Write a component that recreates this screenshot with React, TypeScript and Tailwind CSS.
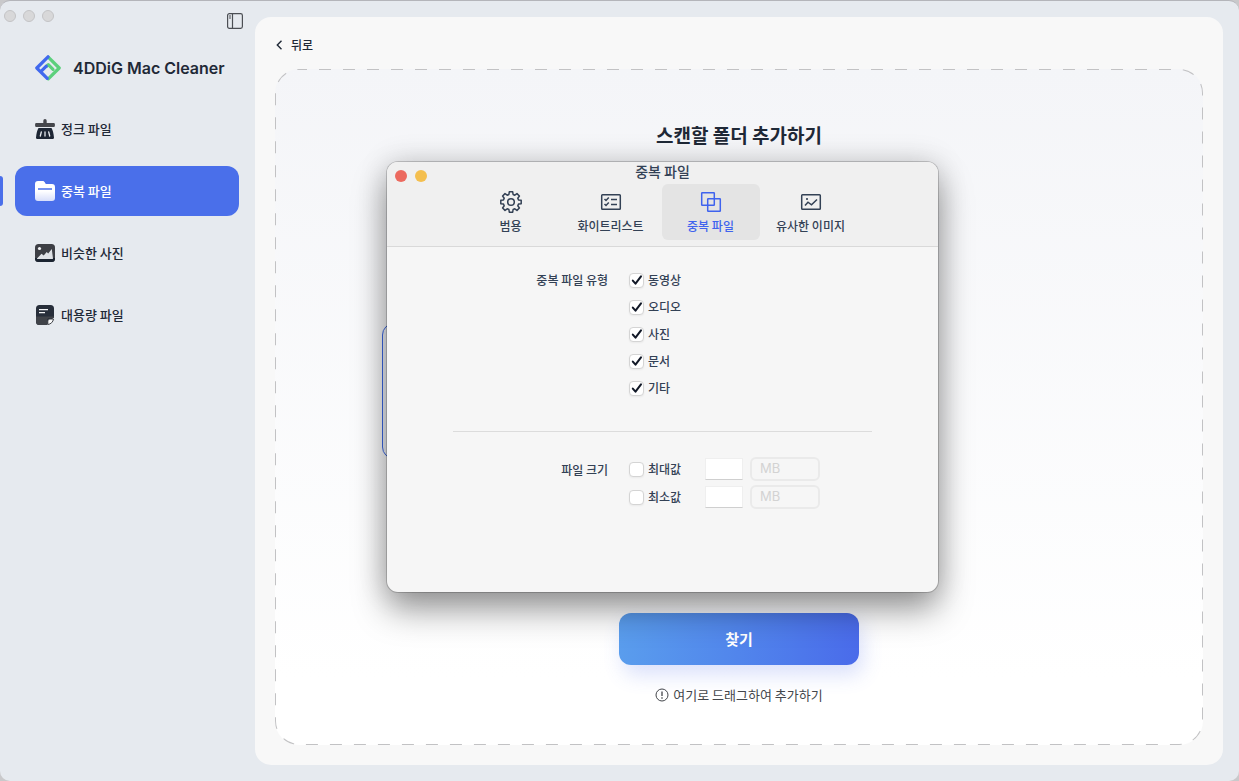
import type { ReactNode } from 'react';
import clsx from 'clsx';

const navItems = [
  { label: '정크 파일', icon: <BroomIcon /> },
  { label: '중복 파일', icon: <FolderIcon />, active: true },
  { label: '비슷한 사진', icon: <PhotoIcon /> },
  { label: '대용량 파일', icon: <NoteIcon /> },
];

const tabs = [
  { label: '범용', icon: <GearIcon /> },
  { label: '화이트리스트', icon: <ListIcon /> },
  { label: '중복 파일', icon: <CopiesIcon />, active: true },
  { label: '유사한 이미지', icon: <ImageIcon /> },
];

const fileTypes = ['동영상', '오디오', '사진', '문서', '기타'];

function LogoIcon() {
  return (
    <svg width="26" height="26" viewBox="0 0 26 26" fill="none" strokeWidth="3.2" strokeLinejoin="round" strokeLinecap="round">
      <path d="M13.500 2.300 24.200 13 13.300 23.900" stroke="#5cd07c" />
      <path d="M11.500 11.200 13.300 9.600l4.700 4.700" stroke="#5cd07c" />
      <path d="M13 1.800 1.800 13l10.400 10.400" stroke="#4169ee" />
      <path d="M7.300 15.200 11.300 11.200" stroke="#4169ee" />
    </svg>
  );
}

function SidebarIcon() {
  return (
    <svg width="16" height="16" viewBox="0 0 16 16" fill="none" stroke="#4c4f54" strokeWidth="1.2">
      <rect x="0.6" y="0.6" width="14.8" height="14.8" rx="1.8" />
      <path d="M5.500 0.600v14.800M2 3h2M2 5h2" />
    </svg>
  );
}

function BroomIcon() {
  return (
    <svg width="20" height="20" viewBox="0 0 20 20">
      <path d="M10 0a1.7 1.7 0 0 1 1.7 1.7V4h7a1.2 1.2 0 0 1 1.2 1.2v1.6A1.2 1.2 0 0 1 18.700 8H1.300A1.200 1.200 0 0 1 .1 6.800V5.200A1.200 1.200 0 0 1 1.300 4h7V1.700A1.700 1.700 0 0 1 10 0Z" fill="#45474c" />
      <path d="M3.500 9h13c1.200 2 2.100 5 2.500 9.500.1.900-.5 1.500-1.400 1.500H2.400c-.9 0-1.500-.6-1.400-1.500C1.400 14 2.300 11 3.500 9Z" fill="#1d2634" />
      <path d="m6.300 13-1 4M10 13v4M13.700 13l1 4" stroke="#e6eaef" strokeWidth="1.300" strokeLinecap="round" />
    </svg>
  );
}

function FolderIcon() {
  return (
    <svg width="20" height="20" viewBox="0 0 20 20">
      <defs>
        <linearGradient id="folder" x1="0" y1="0" x2="0" y2="1">
          <stop offset="0.500" stopColor="#fff" />
          <stop offset="1" stopColor="#d7defa" />
        </linearGradient>
      </defs>
      <path d="M3 0h4.600c1 0 1.500.4 2 1.100L10.800 3H17a3 3 0 0 1 3 3v11a3 3 0 0 1-3 3H3a3 3 0 0 1-3-3V3a3 3 0 0 1 3-3Z" fill="url(#folder)" />
      <path d="M3 8h14" stroke="#4a6fea" strokeWidth="1.600" />
    </svg>
  );
}

function PhotoIcon() {
  return (
    <svg width="20" height="20" viewBox="0 0 20 20">
      <rect y="1" width="20" height="18" rx="3.500" fill="#3d3f45" />
      <path d="M0 15h20v.5a3.500 3.500 0 0 1-3.500 3.500h-13A3.500 3.500 0 0 1 0 15.500Z" fill="#1b2431" />
      <circle cx="4.500" cy="5.500" r="1.600" fill="#f3f4f6" />
      <path d="m2 15.500 4.500-4.700 2.200 1.700 3-3.500 1.500 1.400L16.800 6l1.200 9.500a.8.8 0 0 1-.8.500H2.500a.4.4 0 0 1-.5-.5Z" fill="#dfe2e6" />
    </svg>
  );
}

function NoteIcon() {
  return (
    <svg width="20" height="20" viewBox="0 0 20 20">
      <path d="M4.500 0h11A3.500 3.500 0 0 1 19 3.500V12l-7 8H4.500A3.500 3.500 0 0 1 1 16.500v-13A3.500 3.500 0 0 1 4.500 0Z" fill="#272e3a" />
      <path d="M19 11.500V13h-4.500a2.500 2.500 0 0 0-2.500 2.500V20H4.500A3.500 3.500 0 0 1 1 16.500v-5Z" fill="#404349" />
      <path d="M12.800 19.500V16a2 2 0 0 1 2-2h3.700c-.3 2.800-2.700 5.300-5.700 5.500Z" fill="#fafafa" stroke="#404349" strokeWidth="1" />
      <path d="M4 4.700h9M4 7.700h6" stroke="#f3f4f6" strokeWidth="1.300" />
    </svg>
  );
}

function GearIcon() {
  return (
    <svg width="24" height="24" viewBox="0 0 24 24" fill="none" stroke="currentColor" strokeWidth="1.500" strokeLinejoin="round">
      <path d="M10.300 1.800h3.400l.4 2.700 1.700.7 2.200-1.600 2.400 2.400-1.600 2.200.7 1.700 2.700.4v3.400l-2.700.4-.7 1.700 1.600 2.200-2.400 2.400-2.200-1.600-1.700.7-.4 2.700h-3.400l-.4-2.700-1.700-.7L6 20.400 3.600 18l1.600-2.200-.7-1.700-2.700-.4v-3.400l2.700-.4.7-1.700L3.600 6 6 3.600l2.200 1.600 1.700-.7Z" />
      <circle cx="12" cy="12" r="3.300" />
    </svg>
  );
}

function ListIcon() {
  return (
    <svg width="24" height="24" viewBox="0 0 24 24" fill="none" stroke="currentColor" strokeWidth="1.500">
      <rect x="2.700" y="4.700" width="18.600" height="14.600" rx="0.800" />
      <path d="m5.500 9 1.500 1.500L9.800 7.500M5.500 14 7 15.500l2.800-3M12 9.500h6M12 14.500h6" />
    </svg>
  );
}

function CopiesIcon() {
  return (
    <svg width="24" height="24" viewBox="0 0 24 24" fill="none" stroke="currentColor" strokeWidth="1.500">
      <rect x="2.700" y="2.700" width="12.600" height="12.600" rx="0.500" />
      <rect x="8.700" y="8.700" width="12.600" height="12.600" rx="0.500" />
    </svg>
  );
}

function ImageIcon() {
  return (
    <svg width="24" height="24" viewBox="0 0 24 24" fill="none" stroke="currentColor" strokeWidth="1.500">
      <rect x="2.700" y="4.700" width="18.600" height="14.600" rx="0.800" />
      <path d="m6 15.500 3-3.300 3.500 2.600 5.500-5.300" />
      <circle cx="8" cy="9" r="1.100" fill="currentColor" stroke="none" />
    </svg>
  );
}

function Checkbox({ label, checked }: { label: string; checked?: boolean }) {
  return (
    <label className="flex h-5 items-center gap-1">
      <span className="grid size-[15px] place-items-center">
        <input
          type="checkbox"
          defaultChecked={checked}
          className="peer col-start-1 row-start-1 size-[15px] appearance-none rounded-[4px] border border-[#d4d4d4] bg-white shadow-xs"
        />
        <svg
          viewBox="0 0 12 12"
          fill="none"
          stroke="#111827"
          strokeWidth="2"
          strokeLinecap="round"
          strokeLinejoin="round"
          className="pointer-events-none invisible col-start-1 row-start-1 size-3 peer-checked:visible"
        >
          <path d="M1.800 6.600 4.500 9.700 10 2.300" />
        </svg>
      </span>
      {label}
    </label>
  );
}

function SizeRow({ label }: { label: string }) {
  return (
    <div className="flex items-center">
      <div className="w-[76px]">
        <Checkbox label={label} />
      </div>
      <input
        type="text"
        aria-label={label}
        className="h-[22px] w-[38px] border border-[#efefef] border-b-[#cfcfcf] bg-white px-1 outline-none"
      />
      <select
        disabled
        aria-label={`${label} 단위`}
        className="ml-[7px] h-6 w-[70px] appearance-none rounded-md border-2 border-[#eaeaea] bg-[#f6f6f6] px-2 font-[Inter] text-[13px] font-normal text-[#d3d3d3] opacity-100"
      >
        <option>MB</option>
      </select>
    </div>
  );
}

function Section({
  title,
  titleClass,
  children,
}: {
  title: string;
  titleClass: string;
  children: ReactNode;
}) {
  return (
    <div className="grid grid-cols-[221px_1fr] gap-x-[21px]" role="group" aria-label={title}>
      <div className={clsx('text-right', titleClass)}>{title}</div>
      <div className="flex flex-col">{children}</div>
    </div>
  );
}

function SettingsDialog() {
  return (
    <div
      role="dialog"
      aria-label="중복 파일"
      className="absolute top-[161px] left-[387px] flex h-[430px] w-[551px] flex-col overflow-hidden rounded-[11px] bg-[#f6f6f6] text-[12px] font-medium text-[#334155] shadow-[0_0_0_1px_rgba(0,0,0,0.18),0_0_30px_rgba(0,0,0,0.16),0_18px_34px_rgba(0,0,0,0.38)]"
    >
      <header className="grid h-[85px] shrink-0 border-b border-[#d9d9d9] bg-[#f0f0f0]">
        <div className="col-start-1 row-start-1 flex gap-2 self-start px-2 pt-2">
          <button type="button" aria-label="닫기" className="size-3 rounded-full bg-[#ec6a5f]" />
          <button type="button" aria-label="최소화" className="size-3 rounded-full bg-[#f4bf4f]" />
        </div>
        <h2 className="col-start-1 row-start-1 justify-self-center text-[14px] leading-[18px]">
          중복 파일
        </h2>
        <nav className="col-start-1 row-start-1 mr-1 grid grid-cols-4 gap-[2px] self-end justify-self-center pb-[6px]">
          {tabs.map((tab) => (
            <button
              key={tab.label}
              type="button"
              className={clsx(
                'flex h-14 w-[98px] flex-col items-center rounded-md pt-[6px]',
                tab.active && 'bg-[#e4e4e4] text-[#3f63ee]'
              )}
            >
              {tab.icon}
              <span className="leading-6">{tab.label}</span>
            </button>
          ))}
        </nav>
      </header>

      <div className="flex flex-col pt-[23px]">
        <Section title="중복 파일 유형" titleClass="leading-5">
          <div className="flex flex-col gap-[7px]">
            {fileTypes.map((type) => (
              <Checkbox key={type} label={type} checked />
            ))}
          </div>
        </Section>
        <hr className="mx-[66px] mt-[33px] mb-[25px] border-t border-[#dcdcdc]" />
        <Section title="파일 크기" titleClass="leading-[26px]">
          <div className="flex flex-col gap-1">
            <SizeRow label="최대값" />
            <SizeRow label="최소값" />
          </div>
        </Section>
      </div>
    </div>
  );
}

export default function App() {
  return (
    <div className="min-h-screen bg-[#c9c9cb] font-['Noto_Sans_CJK_KR',sans-serif]">
      <div className="relative flex min-h-screen overflow-hidden rounded-[10px] border-t border-[#b4b5ba] bg-[#e6eaef] text-[#1f2937]">
        <aside className="flex w-[255px] shrink-0 flex-col">
          <div className="flex items-start justify-between pt-[9px] pr-3 pl-1">
            <div className="flex gap-[7px]">
              <span className="size-3 rounded-full border border-[#c3c3c5] bg-[#d8d8d9]" />
              <span className="size-3 rounded-full border border-[#c3c3c5] bg-[#d8d8d9]" />
              <span className="size-3 rounded-full border border-[#c3c3c5] bg-[#d8d8d9]" />
            </div>
            <button type="button" aria-label="사이드바" className="pt-[3px]">
              <SidebarIcon />
            </button>
          </div>
          <div className="mt-[25px] flex items-center gap-3 pl-[35px]">
            <LogoIcon />
            <h1 className="font-[Inter] text-[16px] leading-7 font-semibold">4DDiG Mac Cleaner</h1>
          </div>
          <nav className="mt-[22px] flex flex-col gap-3">
            {navItems.map((item) => (
              <div key={item.label} className="flex items-center pr-4">
                <span className={clsx('mr-3 h-[30px] w-[3px] rounded-r-sm', item.active && 'bg-[#4a6fea]')} />
                <button
                  type="button"
                  className={clsx(
                    'flex h-[50px] flex-1 items-center gap-[6px] rounded-xl pl-5 text-[13px] font-medium',
                    item.active && 'bg-[#4a6fea] text-white'
                  )}
                >
                  {item.icon}
                  {item.label}
                </button>
              </div>
            ))}
          </nav>
        </aside>

        <main className="mt-4 mr-4 mb-4 flex flex-1 flex-col rounded-2xl bg-[#f8f8f8] px-5 pb-5">
          <button type="button" className="flex h-[52px] items-center gap-2 pt-1 text-[12px] font-medium">
            <svg width="8" height="10" viewBox="0 0 8 10" fill="none" stroke="currentColor" strokeWidth="1.400">
              <path d="M6.500 0.800 2.300 5l4.200 4.200" />
            </svg>
            뒤로
          </button>

          <section className="relative flex flex-1 flex-col items-center rounded-3xl bg-linear-to-b from-[#f4f5f8] to-white to-90%">
            {/* long dashes, which a css border cannot draw; the outer half of the stroke is clipped */}
            <svg className="pointer-events-none absolute inset-0 size-full overflow-hidden rounded-3xl" fill="none">
              <rect width="100%" height="100%" rx="24" stroke="#c2c2c4" strokeWidth="2" strokeDasharray="12 12" strokeDashoffset="4" />
            </svg>
            <h2 className="mt-[52px] text-[19px] leading-7 font-bold">스캔할 폴더 추가하기</h2>
            <div className="mt-[174px] ml-[107px] h-[136px] w-[500px] self-start rounded-xl border border-[#3b68e6] bg-[#f0f2f8]" />
            <button
              type="button"
              className="mt-[154px] h-[52px] w-60 rounded-xl bg-linear-to-r from-[#5a9ded] to-[#4a6bea] text-[15px] font-bold text-white shadow-[4px_10px_20px_rgba(74,107,234,0.2)]"
            >
              찾기
            </button>
            <p className="mt-5 flex items-center gap-1 text-[13px] leading-5 text-[#43464b]">
              <svg width="14" height="14" viewBox="0 0 14 14" fill="none" stroke="currentColor">
                <circle cx="7" cy="7" r="6" />
                <path d="M7 3.500v4.500M7 9.300v1.400" strokeWidth="1.300" />
              </svg>
              여기로 드래그하여 추가하기
            </p>
          </section>
        </main>

        <SettingsDialog />
      </div>
    </div>
  );
}
